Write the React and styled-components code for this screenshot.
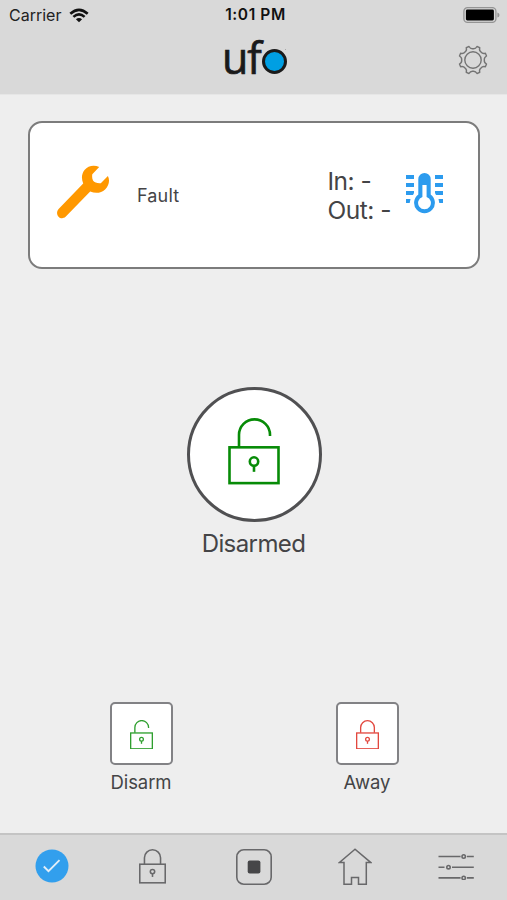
import React from 'react';
import styled, { createGlobalStyle } from 'styled-components';

const GlobalStyle = createGlobalStyle`
  body {
    margin: 0;
    background-color: #eee;
    font-family: Inter, "Liberation Sans", sans-serif;
  }
  svg {
    display: block;
  }
`;

const Screen = styled.div`
  display: flex;
  flex-direction: column;
  height: 900px;
  background-color: #eee;
  color: #444446;
`;

const Header = styled.header`
  height: 95px;
  background-color: #d9d9d9;
  border-bottom: 1px solid #e6e6e6;
  box-sizing: border-box;
`;

const StatusBar = styled.div`
  display: grid;
  grid-template-columns: 1fr auto 1fr;
  align-items: center;
  height: 30px;
  padding: 0 7px 0 9px;
  line-height: 20px;
`;

const Carrier = styled.div`
  display: flex;
  align-items: center;
  gap: 8px;
  font-size: 16px;
  color: #222;
`;

const Time = styled.div`
  padding-left: 2px;
  font-size: 15.5px;
  font-weight: 600;
  letter-spacing: .6px;
  color: #111;
`;

const Battery = styled.div`
  justify-self: end;
`;

const NavBar = styled.div`
  display: grid;
  grid-template-columns: 1fr auto 1fr;
  align-items: center;
  height: 60px;
  padding: 0 19px 0 20px;
`;

const Logo = styled.div`
  grid-column: 2;
  display: flex;
  align-items: center;
  color: #1a1a1a;
`;

const LogoText = styled.span`
  width: 40px;
  margin-left: 1px;
  margin-top: -5px;
  font-family: "Open Sans", "Noto Sans", sans-serif;
  font-size: 43px;
  line-height: 60px;
  letter-spacing: -1.1px;
  -webkit-text-stroke: .7px #1a1a1a;
`;

const LogoDot = styled.span`
  position: relative;
  width: 19px;
  height: 19px;
  margin-top: 3px;
  border: 3px solid #1a1a1a;
  border-radius: 50%;
  background-color: #009fe3;

  &::after {
    content: '';
    position: absolute;
    top: -3px;
    right: -2px;
    width: 1px;
    height: 1px;
    background-color: #aaa;
  }
`;

const SettingsButton = styled.div`
  justify-self: end;
`;

const Main = styled.main`
  flex: 1;
  display: flex;
  flex-direction: column;
  align-items: center;
  padding: 26px 27px 0 28px;
`;

const StatusCard = styled.section`
  display: flex;
  align-items: center;
  box-sizing: border-box;
  width: 452px;
  height: 148px;
  padding: 0 34px 0 26px;
  border: 2px solid #7c7c7c;
  border-radius: 14px;
  background-color: white;
`;

const WrenchHolder = styled.div`
  margin-top: -6px;
`;

const FaultLabel = styled.div`
  margin-left: 27px;
  font-size: 18px;
  letter-spacing: .15px;
`;

const Temperatures = styled.div`
  margin: 2px 15px 0 auto;
  font-size: 24.5px;
  line-height: 29px;
  letter-spacing: -.5px;
`;

const ThermometerHolder = styled.div`
  margin-top: -4px;
`;

const Alarm = styled.div`
  display: flex;
  flex-direction: column;
  align-items: center;
  margin-top: 118px;
`;

const AlarmCircle = styled.div`
  display: flex;
  justify-content: center;
  box-sizing: border-box;
  width: 135px;
  height: 135px;
  padding-top: 28px;
  border: 3px solid #505052;
  border-radius: 50%;
  background-color: white;
`;

const AlarmLabel = styled.div`
  margin-top: 7px;
  padding-right: 1px;
  font-size: 24px;
  line-height: 30px;
  letter-spacing: -.6px;
`;

const Actions = styled.div`
  display: flex;
  gap: 126px;
  margin-top: 143px;
`;

const Action = styled.div`
  display: flex;
  flex-direction: column;
  align-items: center;
  width: 100px;
  font-size: 18.5px;
  line-height: 24px;
  letter-spacing: -.1px;
`;

const ActionButton = styled.div`
  display: flex;
  justify-content: center;
  box-sizing: border-box;
  width: 63px;
  height: 63px;
  margin-bottom: 5px;
  padding-top: 16px;
  border: 2px solid #828285;
  border-radius: 5px;
  background-color: white;
`;

const TabBar = styled.nav`
  display: grid;
  grid-template-columns: repeat(5, 1fr);
  box-sizing: border-box;
  height: 67px;
  padding-left: 1px;
  border-top: 2px solid #c4c4c4;
  background-color: #d9d9d9;
`;

const Tab = styled.div`
  display: flex;
  justify-content: center;
  padding-top: ${props => props.$top}px;
`;

const Wifi = () => (
  <svg width="20" height="15" viewBox="0 0 20 15" fill="none" stroke="#111" strokeWidth="2.6">
    <path d="M1.3 5.7Q10 -2.1 18.7 5.7" />
    <path d="M4.4 8.9Q10 3.9 15.6 8.9" />
    <path d="M10 14.2l-3.1-3Q10 8.8 13.1 11.2z" fill="#111" stroke="none" />
  </svg>
);

const BatteryIcon = () => (
  <svg width="37" height="16" viewBox="0 0 37 16">
    <rect x=".9" y=".7" width="32" height="14.6" rx="3.6" fill="none" stroke="#949494" strokeWidth="1.3" />
    <rect x="2.9" y="2.5" width="28" height="11" rx="1.4" fill="#000" />
    <path d="M34.4 5.5Q36.5 6 36.5 8T34.4 10.5z" fill="#949494" />
  </svg>
);

const TEETH = 8;
const point = (deg, r) => {
  const a = (deg * Math.PI) / 180;
  return `${(15 + r * Math.sin(a)).toFixed(2)} ${(15 - r * Math.cos(a)).toFixed(2)}`;
};

const gearPath = () => {
  let d = `M${point(16.5, 14.1)}`;
  for (let i = 0; i < TEETH; i++) {
    const a = 22.5 + i * 45;
    d += `L${point(a + 6, 14.1)}Q${point(a + 9, 11.3)} ${point(a + 22.5, 11.3)}`;
    d += `Q${point(a + 36, 11.3)} ${point(a + 39, 14.1)}`;
  }
  return d + 'z';
};

const Gear = () => (
  <svg width="30" height="30" viewBox="0 0 30 30" fill="none" stroke="#747474" strokeWidth="1.4" strokeLinejoin="round">
    <path d={gearPath()} />
    <circle cx="15" cy="15" r="8.2" />
  </svg>
);

const Wrench = () => (
  <svg width="54" height="54" viewBox="0 .5 54 52.5" preserveAspectRatio="none">
    <path
      fill="#ff9800"
      d="M43.2 2.4C38.2 .1 32 1 28.5 5.4C25.3 9.4 25.4 14.2 27.2 18.6L2.6 43.3C-1.9 48.3 4.4 55.3 9.6 50.9L34.2 26.2C39.4 28.4 45 28 49.1 24.3C53 20.7 54.1 15.6 51.9 11.2L44.8 18.2C41.8 18.6 38.4 17.6 37 15.6C36 13.2 36 11.6 36.3 9.5z"
    />
  </svg>
);

const Thermometer = () => (
  <svg width="38" height="42" viewBox="0 0 38 42" fill="#2c9bee">
    <path d="M0 3h8v4H0zM0 11h8v4H0zM0 19h8v2l-1 2H0zM0 27h4.5l-.8 4H0z" />
    <path d="M29 3h8v4h-8zM29 11h8v4h-8zM29 19h8v4h-7L29 21zM32.5 27H37v4h-3.7z" />
    <path
      fillRule="evenodd"
      d="M12.3 7.2a6.2 6.2 0 0 1 12.4 0V22.4a10.4 10.4 0 1 1-12.4 0zM16.4 13V24.9a6.4 6.4 0 1 0 4.2 0V13z"
    />
  </svg>
);

const Lock = ({ width, color, stroke, open }) => (
  <svg width={width} height={width * 1.28} viewBox="0 0 52 66.5" fill="none" stroke={color} strokeWidth={stroke}>
    <rect x="1.5" y="29.3" width="49" height="35.8" />
    {open
      ? <path d="M11 29V16.8a15 15 0 0 1 31 0V18" />
      : <path d="M10.5 29V17a15.5 15.5 0 0 1 31 0V29" />}
    <circle cx="26" cy="43.5" r="4.2" />
    <path d="M26 47.7V53.8" />
  </svg>
);

const CheckCircle = () => (
  <svg width="34" height="34" viewBox="0 0 34 34" fill="none">
    <circle cx="17" cy="17" r="16.5" fill="#329fed" />
    <path d="M8.8 17.5l4.7 4.6 11-10.9" stroke="#e2eef8" strokeWidth="1.9" />
  </svg>
);

const StopSquare = () => (
  <svg width="36" height="36" viewBox="0 0 36 36">
    <rect x=".8" y=".8" width="34.4" height="34.4" rx="7" fill="none" stroke="#68686a" strokeWidth="1.6" />
    <rect x="11.7" y="11.5" width="12.7" height="13" rx="2" fill="#464648" />
  </svg>
);

const House = () => (
  <svg width="34" height="38" viewBox="0 0 34 38" fill="none" stroke="#68686a" strokeWidth="1.5">
    <path d="M17 1.3L1.5 14.4H6V36.3H13.5V29.6H20.5V36.3H28.3V14.4H32.6z" />
  </svg>
);

const Sliders = () => (
  <svg width="36" height="26" viewBox="0 0 36 26" fill="none" stroke="#68686a" strokeWidth="1.6">
    <path d="M.5 2.5H22.6M28.9 2.5H35.8M.5 13.2H6.5M14 13.2H35.8M.5 23.9H22.6M28.9 23.9H35.8" />
    <circle cx="25.7" cy="2.5" r="1.7" />
    <circle cx="10.5" cy="13.2" r="1.7" />
    <circle cx="25.7" cy="23.9" r="1.7" />
  </svg>
);

export default class App extends React.Component {
  render() {
    return (
      <Screen>
        <GlobalStyle />
        <Header>
          <StatusBar>
            <Carrier>Carrier <Wifi /></Carrier>
            <Time>1:01 PM</Time>
            <Battery><BatteryIcon /></Battery>
          </StatusBar>
          <NavBar>
            <Logo>
              <LogoText>uf</LogoText>
              <LogoDot />
            </Logo>
            <SettingsButton><Gear /></SettingsButton>
          </NavBar>
        </Header>
        <Main>
          <StatusCard>
            <WrenchHolder><Wrench /></WrenchHolder>
            <FaultLabel>Fault</FaultLabel>
            <Temperatures>
              <div>In: -</div>
              <div>Out: -</div>
            </Temperatures>
            <ThermometerHolder><Thermometer /></ThermometerHolder>
          </StatusCard>
          <Alarm>
            <AlarmCircle>
              <Lock width={52} color="#078b07" stroke={2.6} open />
            </AlarmCircle>
            <AlarmLabel>Disarmed</AlarmLabel>
          </Alarm>
          <Actions>
            <Action>
              <ActionButton>
                <Lock width={23} color="#2f9f2f" stroke={3} open />
              </ActionButton>
              Disarm
            </Action>
            <Action>
              <ActionButton>
                <Lock width={23} color="#e2483f" stroke={3} />
              </ActionButton>
              Away
            </Action>
          </Actions>
        </Main>
        <TabBar>
          <Tab $top={14}><CheckCircle /></Tab>
          <Tab $top={14}><Lock width={27} color="#68686a" stroke={3} /></Tab>
          <Tab $top={14}><StopSquare /></Tab>
          <Tab $top={13}><House /></Tab>
          <Tab $top={19}><Sliders /></Tab>
        </TabBar>
      </Screen>
    );
  }
}
